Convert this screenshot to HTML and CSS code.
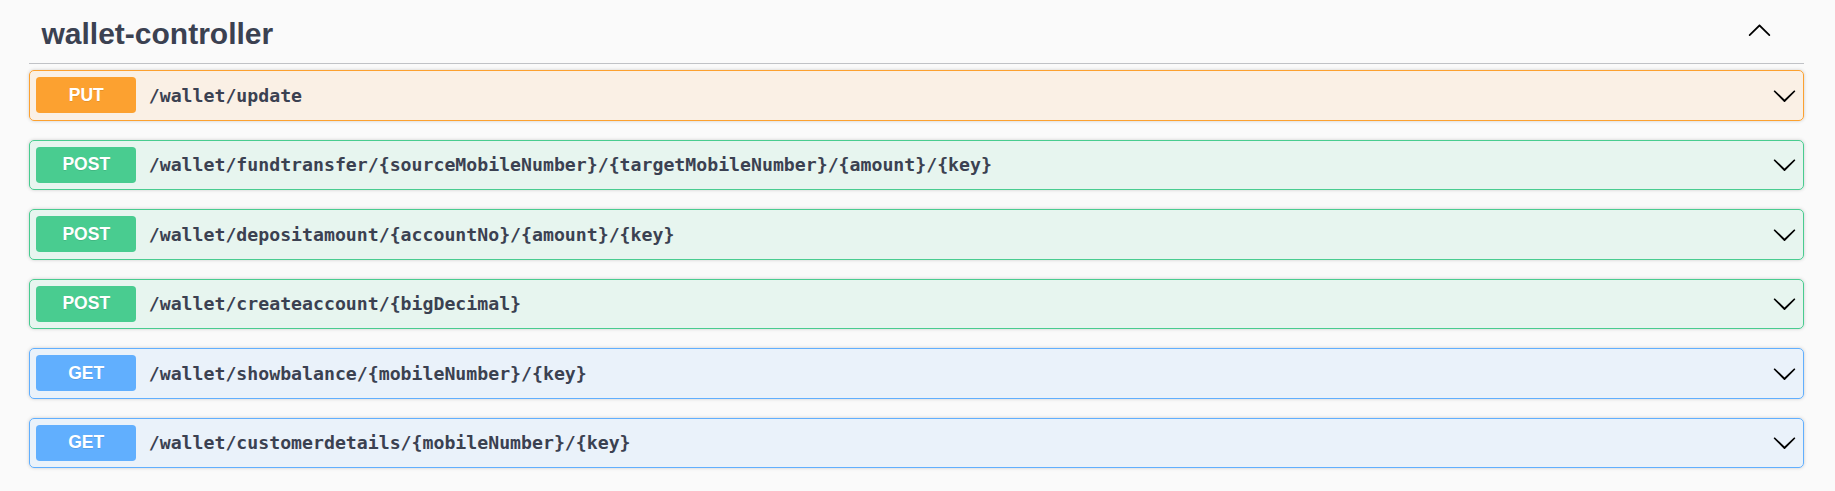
FILE: index.html
```html
<!DOCTYPE html>
<html>
<head>
<meta charset="utf-8">
<link rel="stylesheet" href="styles.css">
</head>
<body>
<div class="wrapper">
  <section class="tag-section">
    <h3 class="opblock-tag">
      <span class="tag-name">wallet-controller</span>
      <svg class="arrow arrow-up" viewBox="0 0 20 20" width="25" height="25"><path d="M17.418 14.908c.272.268.709.268.979 0s.271-.701 0-.969l-7.908-7.83c-.27-.268-.707-.268-.979 0l-7.908 7.83c-.27.268-.27.701 0 .969.271.268.709.268.979 0L10 7.767l7.418 7.141z"/></svg>
    </h3>

    <div class="opblock opblock-put">
      <div class="summary">
        <span class="method">PUT</span>
        <span class="path">/wallet/update</span>
        <svg class="arrow" viewBox="0 0 20 20" width="25" height="25"><path d="M17.418 6.109c.272-.268.709-.268.979 0s.271.701 0 .969l-7.908 7.83c-.27.268-.707.268-.979 0l-7.908-7.83c-.27-.268-.27-.701 0-.969.271-.268.709-.268.979 0L10 13.25l7.418-7.141z"/></svg>
      </div>
    </div>

    <div class="opblock opblock-post">
      <div class="summary">
        <span class="method">POST</span>
        <span class="path">/wallet/fundtransfer/{sourceMobileNumber}/{targetMobileNumber}/{amount}/{key}</span>
        <svg class="arrow" viewBox="0 0 20 20" width="25" height="25"><path d="M17.418 6.109c.272-.268.709-.268.979 0s.271.701 0 .969l-7.908 7.83c-.27.268-.707.268-.979 0l-7.908-7.83c-.27-.268-.27-.701 0-.969.271-.268.709-.268.979 0L10 13.25l7.418-7.141z"/></svg>
      </div>
    </div>

    <div class="opblock opblock-post">
      <div class="summary">
        <span class="method">POST</span>
        <span class="path">/wallet/depositamount/{accountNo}/{amount}/{key}</span>
        <svg class="arrow" viewBox="0 0 20 20" width="25" height="25"><path d="M17.418 6.109c.272-.268.709-.268.979 0s.271.701 0 .969l-7.908 7.83c-.27.268-.707.268-.979 0l-7.908-7.83c-.27-.268-.27-.701 0-.969.271-.268.709-.268.979 0L10 13.25l7.418-7.141z"/></svg>
      </div>
    </div>

    <div class="opblock opblock-post">
      <div class="summary">
        <span class="method">POST</span>
        <span class="path">/wallet/createaccount/{bigDecimal}</span>
        <svg class="arrow" viewBox="0 0 20 20" width="25" height="25"><path d="M17.418 6.109c.272-.268.709-.268.979 0s.271.701 0 .969l-7.908 7.83c-.27.268-.707.268-.979 0l-7.908-7.83c-.27-.268-.27-.701 0-.969.271-.268.709-.268.979 0L10 13.25l7.418-7.141z"/></svg>
      </div>
    </div>

    <div class="opblock opblock-get">
      <div class="summary">
        <span class="method">GET</span>
        <span class="path">/wallet/showbalance/{mobileNumber}/{key}</span>
        <svg class="arrow" viewBox="0 0 20 20" width="25" height="25"><path d="M17.418 6.109c.272-.268.709-.268.979 0s.271.701 0 .969l-7.908 7.83c-.27.268-.707.268-.979 0l-7.908-7.83c-.27-.268-.27-.701 0-.969.271-.268.709-.268.979 0L10 13.25l7.418-7.141z"/></svg>
      </div>
    </div>

    <div class="opblock opblock-get">
      <div class="summary">
        <span class="method">GET</span>
        <span class="path">/wallet/customerdetails/{mobileNumber}/{key}</span>
        <svg class="arrow" viewBox="0 0 20 20" width="25" height="25"><path d="M17.418 6.109c.272-.268.709-.268.979 0s.271.701 0 .969l-7.908 7.83c-.27.268-.707.268-.979 0l-7.908-7.83c-.27-.268-.27-.701 0-.969.271-.268.709-.268.979 0L10 13.25l7.418-7.141z"/></svg>
      </div>
    </div>
  </section>
</div>
</body>
</html>
```

FILE: styles.css
```css
html, body {
  margin: 0;
  padding: 0;
  background: #fafafa;
}

.wrapper {
  padding: 4px 31px 0 29px;
}

.opblock-tag {
  display: flex;
  align-items: center;
  margin: 0 0 6px;
  padding: 12.5px 25px 12.5px 12.5px;
  border-bottom: 1px solid rgba(59, 65, 81, 0.3);
  font-family: "Liberation Sans", Arial, sans-serif;
  font-size: 30px;
  font-weight: 700;
  color: #3b4151;
}

.tag-name {
  flex: 1;
}

.arrow {
  display: block;
  flex: none;
  fill: #000;
}

.arrow-up {
  margin: 0 7px 9px 0;
}

.opblock {
  margin: 0 0 19px;
  border: 1px solid #000;
  border-radius: 5px;
  box-shadow: 0 0 3.75px rgba(0, 0, 0, 0.19);
}

.opblock-put {
  background: rgba(252, 161, 48, 0.1);
  border-color: #fca130;
}

.opblock-put .method {
  background: #fca130;
}

.opblock-post {
  background: rgba(73, 204, 144, 0.1);
  border-color: #49cc90;
}

.opblock-post .method {
  background: #49cc90;
}

.opblock-get {
  background: rgba(97, 175, 254, 0.1);
  border-color: #61affe;
}

.opblock-get .method {
  background: #61affe;
}

.summary {
  display: flex;
  align-items: center;
  padding: 6.25px;
}

.method {
  flex: none;
  min-width: 100px;
  padding: 7.5px 0;
  border-radius: 3.75px;
  color: #fff;
  font-family: "Liberation Sans", Arial, sans-serif;
  font-size: 17.5px;
  font-weight: 700;
  text-align: center;
  text-shadow: 0 1.25px 0 rgba(0, 0, 0, 0.1);
}

.path {
  flex: 1;
  padding: 0 12.5px;
  font-family: "DejaVu Sans Mono", "Liberation Mono", monospace;
  font-size: 18.2px;
  font-weight: 600;
  color: #3b4151;
}
```
